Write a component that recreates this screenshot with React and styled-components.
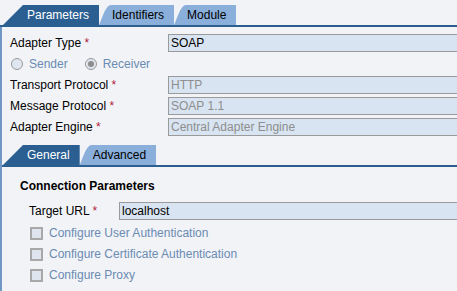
import React from 'react'
import styled, { createGlobalStyle, css } from 'styled-components'

const GlobalStyle = createGlobalStyle`
  html, body {
    margin: 0;
    padding: 0;
    background: #f2f3f7;
    overflow: hidden;
  }
  body {
    font-family: "Liberation Sans", Arial, sans-serif;
    font-size: 12px;
    color: #000;
  }
`

const StyledPage = styled.div`
  width: 457px;
  height: 291px;
  overflow: hidden;
  background: #f2f3f7;
`

const StyledTabStrip = styled.div`
  display: flex;
  align-items: flex-end;
  padding: ${({ $inner }) => ($inner ? '0 0 0 1px' : '5px 0 0 3px')};
  border-bottom: 2px solid #2b5f92;
`

const StyledTab = styled.div`
  height: 20px;
  box-sizing: border-box;
  padding-top: 2px;
  line-height: 17px;
  white-space: nowrap;
  ${({ $active }) =>
    $active
      ? css`
          background: #2b5f92;
          color: #fff;
          padding-left: 24px;
          padding-right: 10px;
          clip-path: polygon(20px 0, 100% 0, 100% 100%, 0 100%);
        `
      : css`
          background: #8aafdb;
          color: #000;
          padding-left: 13px;
          padding-right: 10px;
          clip-path: polygon(0 100%, 2px 75%, 4px 50%, 6px 28%, 8px 12%, 10px 3%, 12px 0, 100% 0, 100% 100%);
        `}
`

const StyledPanel = styled.div`
  border-left: 2px solid #7097c6;
  height: 100%;
`

const StyledForm = styled.div`
  display: flex;
  flex-direction: column;
  gap: 3px;
  padding: 7px 0 9px 8px;
`

const StyledColumn = styled.div`
  display: flex;
  flex-direction: column;
  gap: 3px;
  margin-top: ${({ $offset }) => $offset || 0}px;
`

const StyledRow = styled.div`
  display: flex;
  align-items: center;
  height: 18px;
`

const StyledLabel = styled.div`
  width: ${({ $width }) => $width}px;
  flex-shrink: 0;
  line-height: 18px;
  white-space: nowrap;
`

const StyledStar = styled.span`
  color: #b0213b;
`

const StyledInput = styled.div`
  flex-shrink: 0;
  box-sizing: border-box;
  width: ${({ $width }) => $width}px;
  height: 18px;
  line-height: 16px;
  padding-left: 2px;
  background: #d8e4f1;
  border: 1px solid #9a9a9a;
  color: ${({ $disabled }) => ($disabled ? '#8e8e8e' : '#000')};
  white-space: nowrap;
  overflow: hidden;
`

const StyledChoiceGroup = styled.div`
  display: flex;
  align-items: center;
  gap: 17px;
  padding-left: 1px;
`

const StyledChoice = styled.label`
  display: flex;
  align-items: center;
  gap: 6px;
  color: #6a8bb2;
  line-height: 18px;
  white-space: nowrap;
`

const StyledRadio = styled.span`
  position: relative;
  width: 12px;
  height: 12px;
  box-sizing: border-box;
  border-radius: 50%;
  border: 1px solid #9b9b9b;
  background: #dfe6ef;

  ${({ $checked }) =>
    $checked &&
    css`
      &::after {
        content: '';
        position: absolute;
        left: 2px;
        top: 2px;
        width: 6px;
        height: 6px;
        border-radius: 50%;
        background: #8c8c8c;
      }
    `}
`

const StyledCheckbox = styled.span`
  width: 13px;
  height: 13px;
  box-sizing: border-box;
  border: 2px solid #a8a8a8;
  background: #dfe5ee;
`

const StyledSection = styled.div`
  display: flex;
  flex-direction: column;
  padding: 12px 0 0 18px;
`

const StyledHeading = styled.div`
  font-weight: bold;
  line-height: 14px;
  margin-bottom: 9px;
`

const StyledSectionBody = styled.div`
  display: flex;
  flex-direction: column;
  gap: 3px;
  padding-left: 9px;
`

const StyledCheckRow = styled(StyledRow)`
  padding-left: 1px;
`

const Field = ({ label, value, disabled, labelWidth = 158, inputWidth = 300 }) => (
  <StyledRow>
    <StyledLabel $width={labelWidth}>
      {label} <StyledStar>*</StyledStar>
    </StyledLabel>
    <StyledInput $width={inputWidth} $disabled={disabled}>{value}</StyledInput>
  </StyledRow>
)

const App = () => {
  return (
    <StyledPage>
      <GlobalStyle />
      <StyledTabStrip>
        <StyledTab $active>Parameters</StyledTab>
        <StyledTab>Identifiers</StyledTab>
        <StyledTab>Module</StyledTab>
      </StyledTabStrip>
      <StyledPanel>
        <StyledForm>
          <Field label='Adapter Type' value='SOAP' inputWidth={291} />
          <StyledRow>
            <StyledChoiceGroup>
              <StyledChoice>
                <StyledRadio />
                Sender
              </StyledChoice>
              <StyledChoice>
                <StyledRadio $checked />
                Receiver
              </StyledChoice>
            </StyledChoiceGroup>
          </StyledRow>
          <Field label='Transport Protocol' value='HTTP' disabled />
          <Field label='Message Protocol' value='SOAP 1.1' disabled />
          <Field label='Adapter Engine' value='Central Adapter Engine' disabled />
        </StyledForm>
        <StyledTabStrip $inner>
          <StyledTab $active>General</StyledTab>
          <StyledTab>Advanced</StyledTab>
        </StyledTabStrip>
        <StyledSection>
          <StyledHeading>Connection Parameters</StyledHeading>
          <StyledSectionBody>
            <Field label='Target URL' value='localhost' labelWidth={90} inputWidth={360} />
            <StyledColumn $offset={1}>
              {['Configure User Authentication', 'Configure Certificate Authentication', 'Configure Proxy'].map(text => (
                <StyledCheckRow key={text}>
                  <StyledChoice>
                    <StyledCheckbox />
                    {text}
                  </StyledChoice>
                </StyledCheckRow>
              ))}
            </StyledColumn>
          </StyledSectionBody>
        </StyledSection>
      </StyledPanel>
    </StyledPage>
  )
}

export default App
